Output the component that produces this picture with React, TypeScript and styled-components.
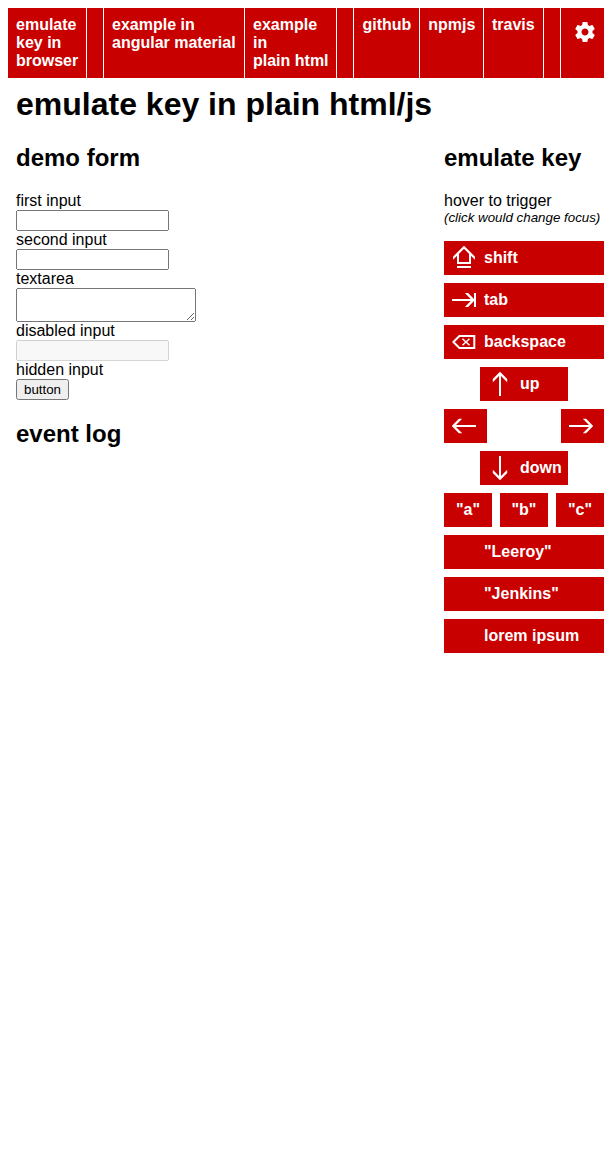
import React from "react";
import styled, { createGlobalStyle } from "styled-components";

const RED = "#c80000";

const GlobalStyle = createGlobalStyle`
  * { box-sizing: border-box; }
  html { overflow: hidden; }
  body {
    margin: 8px 0 0 8px;
    background: #fff;
    color: #000;
    font: 16px/18px "Liberation Sans", Arial, sans-serif;
  }
`;

const Nav = styled.nav`
  display: flex;
  width: 596px;
  height: 70px;
  gap: 1px;
`;

const NavItem = styled.a<{ $width: number; $pad?: number }>`
  flex: 0 0 ${(p) => p.$width}px;
  padding: 8px 0 8px ${(p) => p.$pad ?? 8}px;
  background: ${RED};
  color: #fff;
  font-weight: bold;
  white-space: pre;
`;

const NavSpacer = styled.div`
  flex: 0 0 16px;
  background: ${RED};
`;

const Settings = styled.a`
  flex: 1;
  padding: 12px 0 0 12px;
  background: ${RED};
  color: #fff;
`;

const Glyph = styled.svg`
  display: block;
  flex: none;
  width: 24px;
  height: 24px;
`;

const Title = styled.h1`
  margin: 8px 0 0 8px;
  font-size: 32px;
  line-height: 36px;
`;

const Main = styled.main`
  display: flex;
  justify-content: space-between;
  width: 596px;
  padding: 22px 0 0 8px;
`;

const Column = styled.section`
  width: 300px;
`;

const Aside = styled.aside`
  width: 160px;
`;

const Heading = styled.h2`
  margin: 0 0 21px;
  font-size: 24px;
  line-height: 27px;
  white-space: nowrap;
`;

const Field = styled.label`
  display: block;
`;

const Input = styled.input`
  display: block;
  width: 153px;
  height: 21px;
`;

const TextArea = styled.textarea`
  display: block;
  width: 180px;
  height: 34px;
`;

const Button = styled.button`
  display: block;
  width: 53px;
  height: 21px;
  margin-bottom: 20px;
  padding: 1px 0;
  font: 13.333px "Liberation Sans", Arial, sans-serif;
`;

const Hint = styled.p`
  margin: 0 0 16px;
  white-space: nowrap;
`;

const Small = styled.em`
  display: block;
  font-size: 13.333px;
  line-height: 15px;
`;

const Keys = styled.div`
  display: flex;
  flex-direction: column;
  gap: 8px;
`;

const KeyRow = styled.div`
  display: flex;
  justify-content: space-between;
`;

const Key = styled.div<{ $width: number; $pad?: number; $indent?: number }>`
  display: flex;
  gap: 8px;
  width: ${(p) => p.$width}px;
  height: 34px;
  margin-left: ${(p) => p.$indent || 0}px;
  padding: 5px 0 5px ${(p) => p.$pad ?? 8}px;
  background: ${RED};
  color: #fff;
  font-weight: bold;
  line-height: 24px;
  white-space: nowrap;
`;

const ARROW = "M12 -0.3L19.2 6.9V10.2L13 4V24H11V4L4.8 10.2V6.9Z";

const Arrow = ({ turn }: { turn: number }) => (
  <Glyph viewBox="0 0 24 24" fill="currentColor">
    <path d={ARROW} transform={`rotate(${turn} 12 12)`} />
  </Glyph>
);

const ShiftIcon = () => (
  <Glyph viewBox="0 0 24 24" fill="currentColor">
    <path d="M12 -0.3L23 10.7V13.8L19 9.8V18H5V9.8L1 13.8V10.7ZM12 2.8L7 7.8V16H17V7.8Z" fillRule="evenodd" />
    <path d="M5 20H19V22H5Z" />
  </Glyph>
);

const TabIcon = () => (
  <Glyph viewBox="0 0 24 24" fill="currentColor">
    <path d="M0 11H18.7L12.9 5H16.1L22 11V5H24V19H22V13L16.1 19H12.9L18.7 13H0Z" />
  </Glyph>
);

const BackspaceIcon = () => (
  <Glyph viewBox="0 0 24 24" fill="none" stroke="currentColor">
    <path d="M1.4 12L7.4 6H22.3V18H7.4Z" strokeWidth="2" />
    <path d="M10.5 8.8L17.5 15.2M17.5 8.8L10.5 15.2" strokeWidth="1.5" />
  </Glyph>
);

export default function App() {
  return (
    <>
      <GlobalStyle />
      <Nav>
        <NavItem $width={78}>{"emulate\nkey in\nbrowser"}</NavItem>
        <NavSpacer />
        <NavItem $width={140}>{"example in\nangular material"}</NavItem>
        <NavItem $width={91}>{"example\nin\nplain html"}</NavItem>
        <NavSpacer />
        <NavItem $width={65} $pad={8.5}>github</NavItem>
        <NavItem $width={63} $pad={8.3}>npmjs</NavItem>
        <NavItem $width={59}>travis</NavItem>
        <NavSpacer />
        <Settings>
          <Glyph viewBox="0 0 24 24" fill="currentColor">
            <path d="M19.43 12.98c.04-.32.07-.64.07-.98s-.03-.66-.07-.98l2.11-1.65c.19-.15.24-.42.12-.64l-2-3.46c-.12-.22-.39-.3-.61-.22l-2.49 1c-.52-.4-1.08-.73-1.69-.98l-.38-2.65C14.46 2.18 14.25 2 14 2h-4c-.25 0-.46.18-.49.42l-.38 2.65c-.61.25-1.17.59-1.69.98l-2.49-1c-.23-.09-.49 0-.61.22l-2 3.46c-.13.22-.07.49.12.64l2.11 1.65c-.04.32-.07.65-.07.98s.03.66.07.98l-2.11 1.65c-.19.15-.24.42-.12.64l2 3.46c.12.22.39.3.61.22l2.49-1c.52.4 1.08.73 1.69.98l.38 2.65c.03.24.24.42.49.42h4c.25 0 .46-.18.49-.42l.38-2.65c.61-.25 1.17-.59 1.69-.98l2.49 1c.23.09.49 0 .61-.22l2-3.46c.12-.22.07-.49-.12-.64l-2.11-1.65zM12 15.5c-1.93 0-3.5-1.57-3.5-3.5s1.57-3.5 3.5-3.5 3.5 1.57 3.5 3.5-1.57 3.5-3.5 3.5z" />
          </Glyph>
        </Settings>
      </Nav>
      <Title>emulate key in plain html/js</Title>
      <Main>
        <Column>
          <Heading>demo form</Heading>
          <Field>first input<Input /></Field>
          <Field>second input<Input /></Field>
          <Field>textarea<TextArea /></Field>
          <Field>disabled input<Input disabled /></Field>
          <Field>hidden input</Field>
          <Button>button</Button>
          <Heading>event log</Heading>
        </Column>
        <Aside>
          <Heading>emulate key</Heading>
          <Hint>
            hover to trigger
            <Small>(click would change focus)</Small>
          </Hint>
          <Keys>
            <Key $width={160}><ShiftIcon />shift</Key>
            <Key $width={160}><TabIcon />tab</Key>
            <Key $width={160}><BackspaceIcon />backspace</Key>
            <Key $width={88} $indent={36}><Arrow turn={0} />up</Key>
            <KeyRow>
              <Key $width={43}><Arrow turn={-90} /></Key>
              <Key $width={43}><Arrow turn={90} /></Key>
            </KeyRow>
            <Key $width={88} $indent={36}><Arrow turn={180} />down</Key>
            <KeyRow>
              <Key $width={48} $pad={12}>"a"</Key>
              <Key $width={48} $pad={11.5}>"b"</Key>
              <Key $width={48} $pad={12}>"c"</Key>
            </KeyRow>
            <Key $width={160} $pad={40}>"Leeroy"</Key>
            <Key $width={160} $pad={40}>"Jenkins"</Key>
            <Key $width={160} $pad={40}>lorem ipsum</Key>
          </Keys>
        </Aside>
      </Main>
    </>
  );
}
